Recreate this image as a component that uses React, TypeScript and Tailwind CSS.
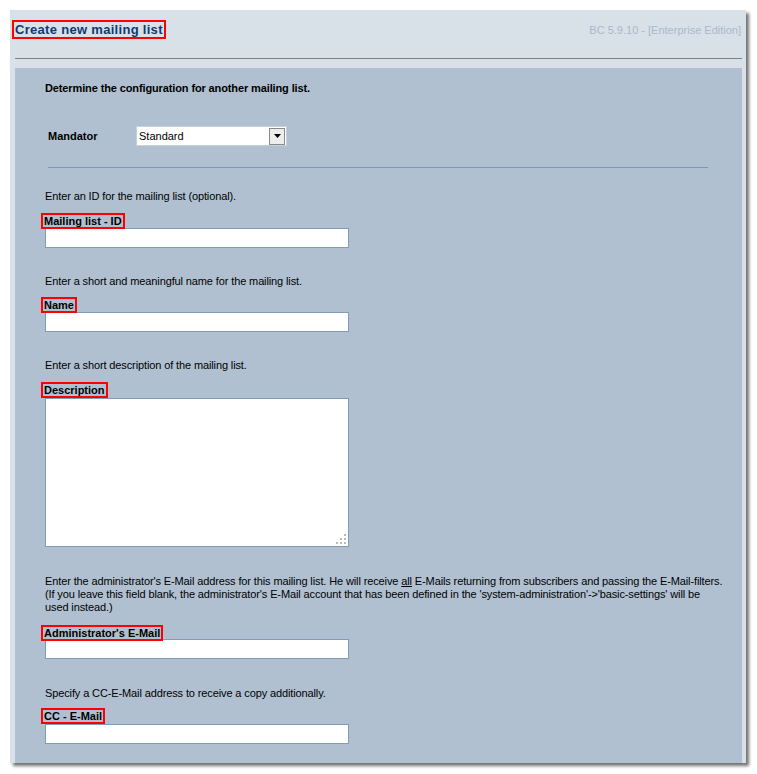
import React from "react";

const font = { fontFamily: '"Liberation Sans", Arial, sans-serif' };

function Label({ children, className = "" }: { children: React.ReactNode; className?: string }) {
  return (
    <div className={`-ml-[4px] flex ${className}`}>
      <span className="block border-2 border-[#ff0000] px-[1px] text-[11px] font-bold leading-[12px] text-black">
        {children}
      </span>
    </div>
  );
}

function TextInput({ className = "" }: { className?: string }) {
  return <div className={`h-[20px] w-[304px] border border-[#7f9db9] bg-white ${className}`} />;
}

function Hint({ children, className = "" }: { children: React.ReactNode; className?: string }) {
  return <p className={`text-[11px] leading-[13px] tracking-[-0.12px] text-black ${className}`}>{children}</p>;
}

function Grip() {
  const dots: [number, number][] = [
    [8, 0],
    [4, 4],
    [8, 4],
    [0, 8],
    [4, 8],
    [8, 8],
  ];
  return (
    <svg width="11" height="11" viewBox="0 0 11 11" className="absolute bottom-[1px] right-[1px]">
      {dots.map(([x, y], i) => (
        <rect key={i} x={x} y={y} width="2" height="2" fill="#b8b8b8" />
      ))}
    </svg>
  );
}

export default function App() {
  return (
    <div className="h-[774px] w-[757px] bg-white pl-[10px] pt-[10px]" style={font}>
      <div className="flex h-[753px] w-[736px] flex-col bg-[#d8e0e8] shadow-[3px_3px_3px_rgba(0,0,0,0.55)]">
        {/* title bar */}
        <div className="flex h-[48px] shrink-0 items-start justify-between pl-[2px] pr-[5px] pt-[10px]">
          <span className="block border-2 border-[#ff0000] px-[1px] text-[13px] font-bold leading-[15px] tracking-[0.3px] text-[#0d3a73]">
            Create new mailing list
          </span>
          <span className="block pt-[4px] text-[11px] leading-[13px] text-[#a9b9cc]">
            BC 5.9.10 - [Enterprise Edition]
          </span>
        </div>
        <div className="ml-[5px] mr-[4px] h-px shrink-0 bg-[#808080]" />

        {/* form panel */}
        <div className="ml-[5px] mr-[4px] mt-[9px] flex-1 overflow-hidden bg-[#b0c0d1] pl-[30px] pt-[14px]">
          <Hint className="font-bold">Determine the configuration for another mailing list.</Hint>

          <div className="ml-[3px] mt-[31px] flex items-center">
            <span className="w-[88px] text-[11px] font-bold text-black">Mandator</span>
            <div className="flex h-[20px] w-[151px] items-center border border-[#c6d0da] bg-white">
              <span className="flex-1 pl-[2px] text-[11px] text-black">Standard</span>
              <div className="mr-px flex h-[17px] w-[16px] items-center justify-center border border-[#8a8a8a] bg-[#ededed]">
                <svg width="7" height="4" viewBox="0 0 7 4">
                  <path d="M0 0H7L3.5 4Z" fill="#000" />
                </svg>
              </div>
            </div>
          </div>

          <div className="ml-[3px] mt-[21px] h-px w-[660px] bg-[#7b97bb]" />

          <Hint className="mt-[22px]">Enter an ID for the mailing list (optional).</Hint>
          <Label className="mt-[10px]">Mailing list - ID</Label>
          <TextInput className="-mt-px" />

          <Hint className="mt-[27px]">Enter a short and meaningful name for the mailing list.</Hint>
          <Label className="mt-[9px]">Name</Label>
          <TextInput className="-mt-px" />

          <Hint className="mt-[27px]">Enter a short description of the mailing list.</Hint>
          <Label className="mt-[10px]">Description</Label>
          <div className="relative h-[149px] w-[304px] border border-[#7f9db9] bg-white">
            <Grip />
          </div>

          <Hint className="mt-[28px]">
            Enter the administrator's E-Mail address for this mailing list. He will receive <u>all</u> E-Mails
            returning from subscribers and passing the E-Mail-filters.
            <br />
            (If you leave this field blank, the administrator's E-Mail account that has been defined in the
            'system-administration'-&gt;'basic-settings' will be
            <br />
            used instead.)
          </Hint>
          <Label className="mt-[11px]">Administrator's E-Mail</Label>
          <TextInput className="-mt-[2px]" />

          <Hint className="mt-[28px]">Specify a CC-E-Mail address to receive a copy additionally.</Hint>
          <Label className="mt-[8px]">CC - E-Mail</Label>
          <TextInput />
        </div>
      </div>
    </div>
  );
}
